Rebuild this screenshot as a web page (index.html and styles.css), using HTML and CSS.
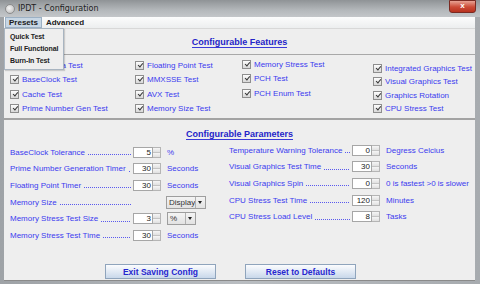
FILE: index.html
```html
<!DOCTYPE html>
<html>
<head>
  <title>IPDT - Configuration</title>
  <link rel="stylesheet" href="styles.css">
</head>
<body>
  <div class="window">
    <div class="titlebar">
      <span class="app-icon"></span>
      <span class="title-text">IPDT - Configuration</span>
      <span class="close-btn">x</span>
    </div>
    <div class="client">
      <div class="menubar">
        <div class="menu menu-open">Presets
          <div class="dropdown">
            <div class="dropdown-item">Quick Test</div>
            <div class="dropdown-item">Full Functional</div>
            <div class="dropdown-item">Burn-In Test</div>
          </div>
        </div>
        <div class="menu">Advanced</div>
      </div>

      <div class="section-head features-head"><span class="section-title">Configurable Features</span></div>

      <div class="features">
        <div class="feat-col">
          <label class="feat"><span class="cb"></span>CPUID Data Test</label>
          <label class="feat"><span class="cb"></span>BaseClock Test</label>
          <label class="feat"><span class="cb"></span>Cache Test</label>
          <label class="feat"><span class="cb"></span>Prime Number Gen Test</label>
        </div>
        <div class="feat-col">
          <label class="feat"><span class="cb"></span>Floating Point Test</label>
          <label class="feat"><span class="cb"></span>MMXSSE Test</label>
          <label class="feat"><span class="cb"></span>AVX Test</label>
          <label class="feat"><span class="cb"></span>Memory Size Test</label>
        </div>
        <div class="feat-col feat-col-up">
          <label class="feat"><span class="cb"></span>Memory Stress Test</label>
          <label class="feat"><span class="cb"></span>PCH Test</label>
          <label class="feat"><span class="cb"></span>PCH Enum Test</label>
        </div>
        <div class="feat-col feat-col-down">
          <label class="feat"><span class="cb"></span>Integrated Graphics Test</label>
          <label class="feat"><span class="cb"></span>Visual Graphics Test</label>
          <label class="feat"><span class="cb"></span>Graphics Rotation</label>
          <label class="feat"><span class="cb"></span>CPU Stress Test</label>
        </div>
      </div>

      <div class="section-head params-head"><span class="section-title">Configurable Parameters</span></div>

      <div class="params">
        <div class="param-col">
          <div class="param">
            <span class="param-label"><span>BaseClock Tolerance</span><span class="leader"></span></span>
            <span class="spin"><span class="spin-val">5</span><span class="spin-btns"><i></i><i></i></span></span>
            <span class="unit">%</span>
          </div>
          <div class="param">
            <span class="param-label"><span>Prime Number Generation Timer</span><span class="leader"></span></span>
            <span class="spin"><span class="spin-val">30</span><span class="spin-btns"><i></i><i></i></span></span>
            <span class="unit">Seconds</span>
          </div>
          <div class="param">
            <span class="param-label"><span>Floating Point Timer</span><span class="leader"></span></span>
            <span class="spin"><span class="spin-val">30</span><span class="spin-btns"><i></i><i></i></span></span>
            <span class="unit">Seconds</span>
          </div>
          <div class="param">
            <span class="param-label"><span>Memory Size</span><span class="leader"></span></span>
            <span class="combo combo-wide"><span class="combo-val">Display</span><span class="combo-btn"></span></span>
          </div>
          <div class="param">
            <span class="param-label"><span>Memory Stress Test Size</span><span class="leader"></span></span>
            <span class="spin"><span class="spin-val">3</span><span class="spin-btns"><i></i><i></i></span></span>
            <span class="combo"><span class="combo-val">%</span><span class="combo-btn"></span></span>
          </div>
          <div class="param">
            <span class="param-label"><span>Memory Stress Test Time</span><span class="leader"></span></span>
            <span class="spin"><span class="spin-val">30</span><span class="spin-btns"><i></i><i></i></span></span>
            <span class="unit">Seconds</span>
          </div>
        </div>
        <div class="param-col param-col-right">
          <div class="param">
            <span class="param-label"><span>Temperature Warning Tolerance</span><span class="leader"></span></span>
            <span class="spin"><span class="spin-val">0</span><span class="spin-btns"><i></i><i></i></span></span>
            <span class="unit">Degress Celcius</span>
          </div>
          <div class="param">
            <span class="param-label"><span>Visual Graphics Test Time</span><span class="leader"></span></span>
            <span class="spin"><span class="spin-val">30</span><span class="spin-btns"><i></i><i></i></span></span>
            <span class="unit">Seconds</span>
          </div>
          <div class="param">
            <span class="param-label"><span>Visual Graphics Spin</span><span class="leader"></span></span>
            <span class="spin"><span class="spin-val">0</span><span class="spin-btns"><i></i><i></i></span></span>
            <span class="unit">0 is fastest &gt;0 is slower</span>
          </div>
          <div class="param">
            <span class="param-label"><span>CPU Stress Test Time</span><span class="leader"></span></span>
            <span class="spin"><span class="spin-val">120</span><span class="spin-btns"><i></i><i></i></span></span>
            <span class="unit">Minutes</span>
          </div>
          <div class="param">
            <span class="param-label"><span>CPU Stress Load Level</span><span class="leader"></span></span>
            <span class="spin"><span class="spin-val">8</span><span class="spin-btns"><i></i><i></i></span></span>
            <span class="unit">Tasks</span>
          </div>
        </div>
      </div>

      <div class="buttons">
        <button class="btn">Exit Saving Config</button>
        <button class="btn">Reset to Defaults</button>
      </div>
    </div>
  </div>
</body>
</html>
```

FILE: styles.css
```css
/* Ventana de configuracion IPDT */
html, body {
  margin: 0;
  padding: 0;
}

body {
  width: 480px;
  height: 284px;
  overflow: hidden;
  font-family: "Liberation Sans", Arial, sans-serif;
  font-size: 8px;
  background: #a9adb1;
}

.window {
  display: flex;
  flex-direction: column;
  height: 284px;
  background: linear-gradient(to right, #9ea2a6, #b9bdc1 50%, #a7abaf);
}

.titlebar {
  height: 17px;
  display: flex;
  align-items: center;
  padding: 0 5px;
  background: linear-gradient(#8f9396, #b4b8bb 60%, #c3c6c9);
}

.app-icon {
  width: 8px;
  height: 8px;
  border-radius: 50%;
  background: radial-gradient(circle at 40% 40%, #f4f4f4, #b5b5b5);
  border: 1px solid #8c8c8c;
  margin-right: 3px;
}

.title-text {
  flex: 1;
  font-family: "DejaVu Sans", sans-serif;
  font-size: 8px;
  color: #1e1e1e;
}

.close-btn {
  width: 25px;
  height: 11px;
  margin-top: -5px;
  margin-right: -1px;
  border: 1px solid #7a2a22;
  border-radius: 0 0 3px 3px;
  background: linear-gradient(#e8a294, #cc4a36 55%, #b8321f);
  color: #fff;
  font-weight: bold;
  font-size: 8px;
  line-height: 10px;
  text-align: center;
}

.client {
  flex: 1;
  display: flex;
  flex-direction: column;
  margin: 0 5px 3px 4px;
  background: #eeeeee;
  border-bottom: 1px solid #8a8a8a;
  position: relative;
}

/* Menu */
.menubar {
  height: 11px;
  display: flex;
  align-items: center;
  background: linear-gradient(#fcfcfc, #eceeef);
  border-bottom: 1px solid #d8d8d8;
  font-weight: bold;
  color: #202020;
}

.menu {
  padding: 0 3px;
  height: 10px;
  line-height: 10px;
  margin-left: 1px;
  position: relative;
}

.menu-open {
  background: #c7d6e4;
  border: 1px solid #9bb0c4;
  height: 9px;
  line-height: 9px;
}

.dropdown {
  position: absolute;
  left: -2px;
  top: 10px;
  width: 58px;
  padding: 2px 0 2px;
  background: #eeeeee;
  border: 1px solid #a8b4c0;
  box-shadow: 1px 1px 1px rgba(0, 0, 0, 0.15);
  z-index: 5;
}

.dropdown-item {
  height: 12px;
  line-height: 12px;
  padding-left: 5px;
  font-size: 7px;
  letter-spacing: -0.1px;
  color: #222;
  white-space: nowrap;
}

/* Secciones */
.section-head {
  display: flex;
  justify-content: center;
  align-items: center;
}

.features-head {
  height: 24px;
  padding-top: 1px;
}

.params-head {
  height: 19px;
  padding-top: 5px;
}

.section-title {
  font-weight: bold;
  font-size: 9px;
  color: #2424c8;
  border-bottom: 1px solid #3a3ad8;
  line-height: 10px;
}

.features {
  display: grid;
  grid-template-columns: 125px 107px 131px auto;
  padding: 5px 0 2px 6px;
  height: 56px;
  border-top: 1px solid #a8a8a8;
  border-bottom: 2px solid #a3a3a3;
}

.feat-col {
  display: flex;
  flex-direction: column;
  gap: 4px;
}

.feat-col-up {
  margin-top: -1px;
}

.feat-col-down {
  margin-top: 3px;
  gap: 3px;
}

.feat {
  display: flex;
  align-items: center;
  height: 10.5px;
  color: #3b3bef;
  white-space: nowrap;
}

.cb {
  width: 7px;
  height: 7px;
  border: 1px solid #8e8e8e;
  background: linear-gradient(#fdfdfd, #d8d8d8);
  margin-right: 3px;
  position: relative;
  flex-shrink: 0;
}

.cb::after {
  content: "";
  position: absolute;
  left: 2.5px;
  top: 0;
  width: 1.5px;
  height: 4px;
  border: solid #333;
  border-width: 0 1.3px 1.3px 0;
  transform: rotate(40deg);
}

/* Parametros */
.params {
  display: grid;
  grid-template-columns: 219px auto;
  padding-left: 6px;
}

.param-col {
  display: flex;
  flex-direction: column;
}

.param-col-right {
  margin-top: -2px;
}

.param {
  display: flex;
  align-items: center;
  height: 16.6px;
  color: #3b3bef;
  white-space: nowrap;
}

.param-label {
  display: flex;
  align-items: center;
  width: 122px;
  margin-right: 1px;
  flex-shrink: 0;
}

.leader {
  flex: 1;
  height: 1px;
  margin: 5px 1px 0 3px;
  background: repeating-linear-gradient(to right, #5a5aee 0 1px, transparent 1px 2px);
}

.spin {
  display: flex;
  width: 28px;
  height: 11px;
  flex-shrink: 0;
}

.spin-val {
  flex: 1;
  background: #fff;
  border: 1px solid #a6a6a6;
  text-align: right;
  padding-right: 1px;
  line-height: 9px;
  color: #222;
}

.spin-btns {
  width: 7px;
  display: flex;
  flex-direction: column;
  border: 1px solid #b5b5b5;
  border-left: 0;
}

.spin-btns i {
  flex: 1;
  background: linear-gradient(#f6f6f6, #e0e0e0);
}

.spin-btns i + i {
  border-top: 1px solid #c4c4c4;
}

.unit {
  margin-left: 6px;
}

.combo {
  display: flex;
  width: 27px;
  height: 11px;
  margin-left: 6px;
  border: 1px solid #9e9e9e;
  background: linear-gradient(#f4f4f4, #e2e2e2);
  color: #333;
}

.combo-wide {
  width: 38px;
  margin-left: 33px;
}

.combo-val {
  flex: 1;
  padding-left: 2px;
  line-height: 11px;
}

.combo-btn {
  width: 9px;
  border-left: 1px solid #b0b0b0;
  position: relative;
}

.combo-btn::after {
  content: "";
  position: absolute;
  left: 2px;
  top: 4px;
  border-left: 2.5px solid transparent;
  border-right: 2.5px solid transparent;
  border-top: 3px solid #222;
}

/* Botones */
.buttons {
  margin-top: auto;
  display: flex;
  gap: 29px;
  padding: 0 0 1px 101px;
}

.btn {
  width: 111px;
  height: 15px;
  padding: 0;
  font-family: "Liberation Sans", Arial, sans-serif;
  font-size: 8.5px;
  font-weight: bold;
  color: #2626cf;
  border: 1px solid #8fa4bc;
  background: linear-gradient(#fbfcfe, #e2eaf4 50%, #c9d8ea);
  cursor: pointer;
}
```
